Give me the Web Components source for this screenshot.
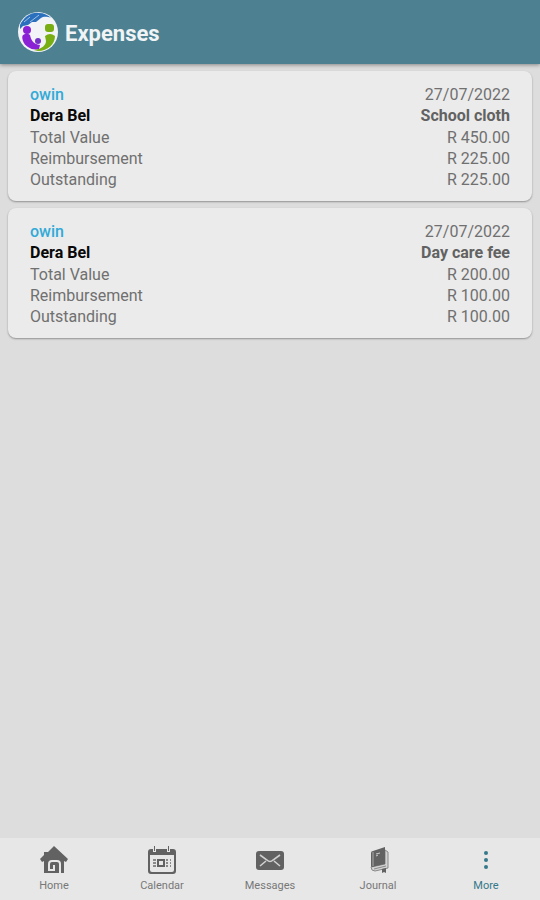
<!DOCTYPE html>
<html lang="en">
<head>
<meta charset="utf-8">
<meta name="viewport" content="width=device-width, initial-scale=1">
<title>Expenses</title>
<style>
    body {
        margin: 0;
        font-family: Roboto, "Liberation Sans", sans-serif;
        --theme-color: #4d8191;
        --active-color: #34788a;
        --surface: #ebebeb;
        --muted: #707070;
    }
</style>
</head>
<body>
<expenses-app></expenses-app>

<script>
class AppHeader extends HTMLElement {
    constructor() {
        super();
        this.attachShadow({ mode: "open" });
    }

    connectedCallback() {
        this.shadowRoot.innerHTML = `
            <style>
                :host {
                    display: block;
                    background: var(--theme-color);
                    box-shadow: 0 1px 4px rgba(0, 0, 0, .4);
                }
                header {
                    display: flex;
                    align-items: center;
                    gap: 7px;
                    padding: 12px 18px;
                }
                svg {
                    width: 40px;
                    height: 40px;
                    flex: none;
                }
                h1 {
                    margin: 0;
                    padding-top: 3px;
                    color: #f0f4f6;
                    font-size: 22px;
                    line-height: 28px;
                    font-weight: 700;
                }
            </style>
            <header>
                <svg viewBox="0 0 40 40" aria-hidden="true">
                    <circle cx="20" cy="20" r="20" fill="#f1f3f7"/>
                    <path d="M2 13C6 5 13 0 21 1c5 0 9 2 12 5-5-2-8-1-10 0l-5 4-4 0-4 3-5 1-3 3z" fill="#2b70bd"/>
                    <path d="M6 10l6-5M12 10l9-7" stroke="#9fc1e3" stroke-width="1" fill="none"/>
                    <circle cx="9" cy="18" r="4" fill="#8a21d4"/>
                    <path d="M5 23q4-3 7 0c1 5 3 9 10 10l-1 4c-6 2-14-2-16-8-1-3-1-5 0-6z" fill="#8a21d4"/>
                    <circle cx="20" cy="29" r="3" fill="#7530c5"/>
                    <rect x="27" y="12" width="9" height="8" rx="3" fill="#79ad14"/>
                    <path d="M27 24q5-4 10 0c0 8-7 15-17 15l-4-1c8-1 12-5 12-9z" fill="#79ad14"/>
                </svg>
                <h1><slot></slot></h1>
            </header>
        `;
    }
}

class ExpenseCard extends HTMLElement {
    constructor() {
        super();
        this.attachShadow({ mode: "open" });
    }

    connectedCallback() {
        this.shadowRoot.innerHTML = `
            <style>
                :host {
                    display: block;
                    padding: 13px 22px 11px;
                    border-radius: 8px;
                    background: var(--surface);
                    box-shadow: 0 1px 2px rgba(0, 0, 0, .35);
                    color: var(--muted);
                    font-size: 16px;
                    line-height: 21px;
                }
                article {
                    display: grid;
                    gap: 1px;
                }
                .row {
                    display: flex;
                    justify-content: space-between;
                }
                .title {
                    font-weight: 700;
                    color: #626262;
                }
                .owner {
                    color: #31aad8;
                    font-weight: 500;
                }
                .child {
                    color: #080808;
                }
                dl, dd {
                    margin: 0;
                }
            </style>
            <article>
                <div>
                    <div class="row">
                        <span class="owner"><slot name="owner"></slot></span>
                        <span><slot name="date"></slot></span>
                    </div>
                    <div class="row title">
                        <span class="child"><slot name="child"></slot></span>
                        <span><slot name="item"></slot></span>
                    </div>
                </div>
                <dl>
                    <div class="row"><dt>Total Value</dt><dd><slot name="total"></slot></dd></div>
                    <div class="row"><dt>Reimbursement</dt><dd><slot name="reimbursement"></slot></dd></div>
                    <div class="row"><dt>Outstanding</dt><dd><slot name="outstanding"></slot></dd></div>
                </dl>
            </article>
        `;
    }
}

const ICONS = {
    home: `
        <path d="M14 0l14 13-2 3-2-1v12H4V15l-2 1-2-3 4-4V6h4v0z"/>
        <path d="M20 28V18q0-3-3-3h-5q-3 0-3 3v6h5v-5" fill="none" stroke="#e7e7e7" stroke-width="2"/>`,
    calendar: `
        <path fill-rule="evenodd" d="M3 3h2v3h3V3h11v3h3V3h3q3 0 3 3v19q0 3-3 3H3q-3 0-3-3V6q0-3 3-3zm-1 6v15q0 2 2 2h20q2 0 2-2V9z"/>
        <path d="M6 0h1v5H6zM20 0h1v5h-1z"/>
        <path d="M5 13h3v2H5zM5 16h3v2H5zM5 19h3v2H5zM18 13h2v2h-2zM22 13h1v2h-1zM18 16h2v2h-2zM22 16h1v2h-1zM18 19h2v2h-2zM22 19h1v2h-1z" opacity=".7"/>
        <path d="M10 14h6v6h-6z" fill="none" stroke="currentColor" stroke-width="2"/>`,
    messages: `
        <rect y="5" width="28" height="19" rx="3"/>
        <path d="M4 9l7 5q3 3 6 0l7-5M4 20l6-5M24 20l-6-5" fill="none" stroke="#d0d0d0" stroke-width="1.6"/>`,
    journal: `
        <path d="M21 4l3 2v16l-13 3q-4 0-4-4l14-3z" fill="#d2d2d2" stroke="#888"/>
        <path d="M7 7q0-2 2-2l12-4v17L8 21q-1 0-1-1z"/>
        <path d="M9 6v14" stroke="#aaa" fill="none"/>
        <path d="M12 8l4-1M12 10l2-1" stroke="#ccc" fill="none"/>
        <path d="M10 23l12-3" stroke="#888" fill="none"/>
        <path d="M18 23l4-1v5l-2-1-2 1z"/>`,
    more: `
        <circle cx="14" cy="7" r="2"/><circle cx="14" cy="14" r="2"/><circle cx="14" cy="21" r="2"/>`
};

class NavTab extends HTMLElement {
    constructor() {
        super();
        this.attachShadow({ mode: "open" });
    }

    connectedCallback() {
        const name = this.getAttribute("icon");
        const current = this.hasAttribute("active") ? 'aria-current="page"' : "";

        this.shadowRoot.innerHTML = `
            <style>
                :host {
                    display: block;
                    flex: 1;
                    min-width: 0;
                }
                a {
                    display: flex;
                    flex-direction: column;
                    align-items: center;
                    gap: 5px;
                    padding: 8px 0 7px;
                    color: #777;
                    font-size: 11px;
                    line-height: 14px;
                    text-decoration: none;
                }
                a[aria-current] {
                    color: var(--active-color);
                }
                svg {
                    width: 28px;
                    height: 28px;
                    fill: currentColor;
                    color: #626262;
                }
                a[aria-current] svg {
                    color: inherit;
                }
            </style>
            <a href="#${name}" ${current}>
                <svg viewBox="0 0 28 28" aria-hidden="true">${ICONS[name]}</svg>
                <span><slot></slot></span>
            </a>
        `;
    }
}

class ExpensesApp extends HTMLElement {
    constructor() {
        super();
        this.attachShadow({ mode: "open" });
    }

    connectedCallback() {
        this.shadowRoot.innerHTML = `
            <style>
                :host {
                    display: flex;
                    flex-direction: column;
                    min-height: 100vh;
                    background: #ddd;
                }
                main {
                    flex: 1;
                    display: flex;
                    flex-direction: column;
                    gap: 7px;
                    padding: 7px 8px;
                }
                nav {
                    display: flex;
                    background: #e7e7e7;
                }
            </style>
            <app-header>Expenses</app-header>
            <main>
                <expense-card>
                    <span slot="owner">owin</span>
                    <span slot="date">27/07/2022</span>
                    <span slot="child">Dera Bel</span>
                    <span slot="item">School cloth</span>
                    <span slot="total">R 450.00</span>
                    <span slot="reimbursement">R 225.00</span>
                    <span slot="outstanding">R 225.00</span>
                </expense-card>
                <expense-card>
                    <span slot="owner">owin</span>
                    <span slot="date">27/07/2022</span>
                    <span slot="child">Dera Bel</span>
                    <span slot="item">Day care fee</span>
                    <span slot="total">R 200.00</span>
                    <span slot="reimbursement">R 100.00</span>
                    <span slot="outstanding">R 100.00</span>
                </expense-card>
            </main>
            <nav aria-label="Main">
                <nav-tab icon="home">Home</nav-tab>
                <nav-tab icon="calendar">Calendar</nav-tab>
                <nav-tab icon="messages">Messages</nav-tab>
                <nav-tab icon="journal">Journal</nav-tab>
                <nav-tab icon="more" active>More</nav-tab>
            </nav>
        `;
    }
}

customElements.define("app-header", AppHeader);
customElements.define("expense-card", ExpenseCard);
customElements.define("nav-tab", NavTab);
customElements.define("expenses-app", ExpensesApp);
</script>
</body>
</html>
